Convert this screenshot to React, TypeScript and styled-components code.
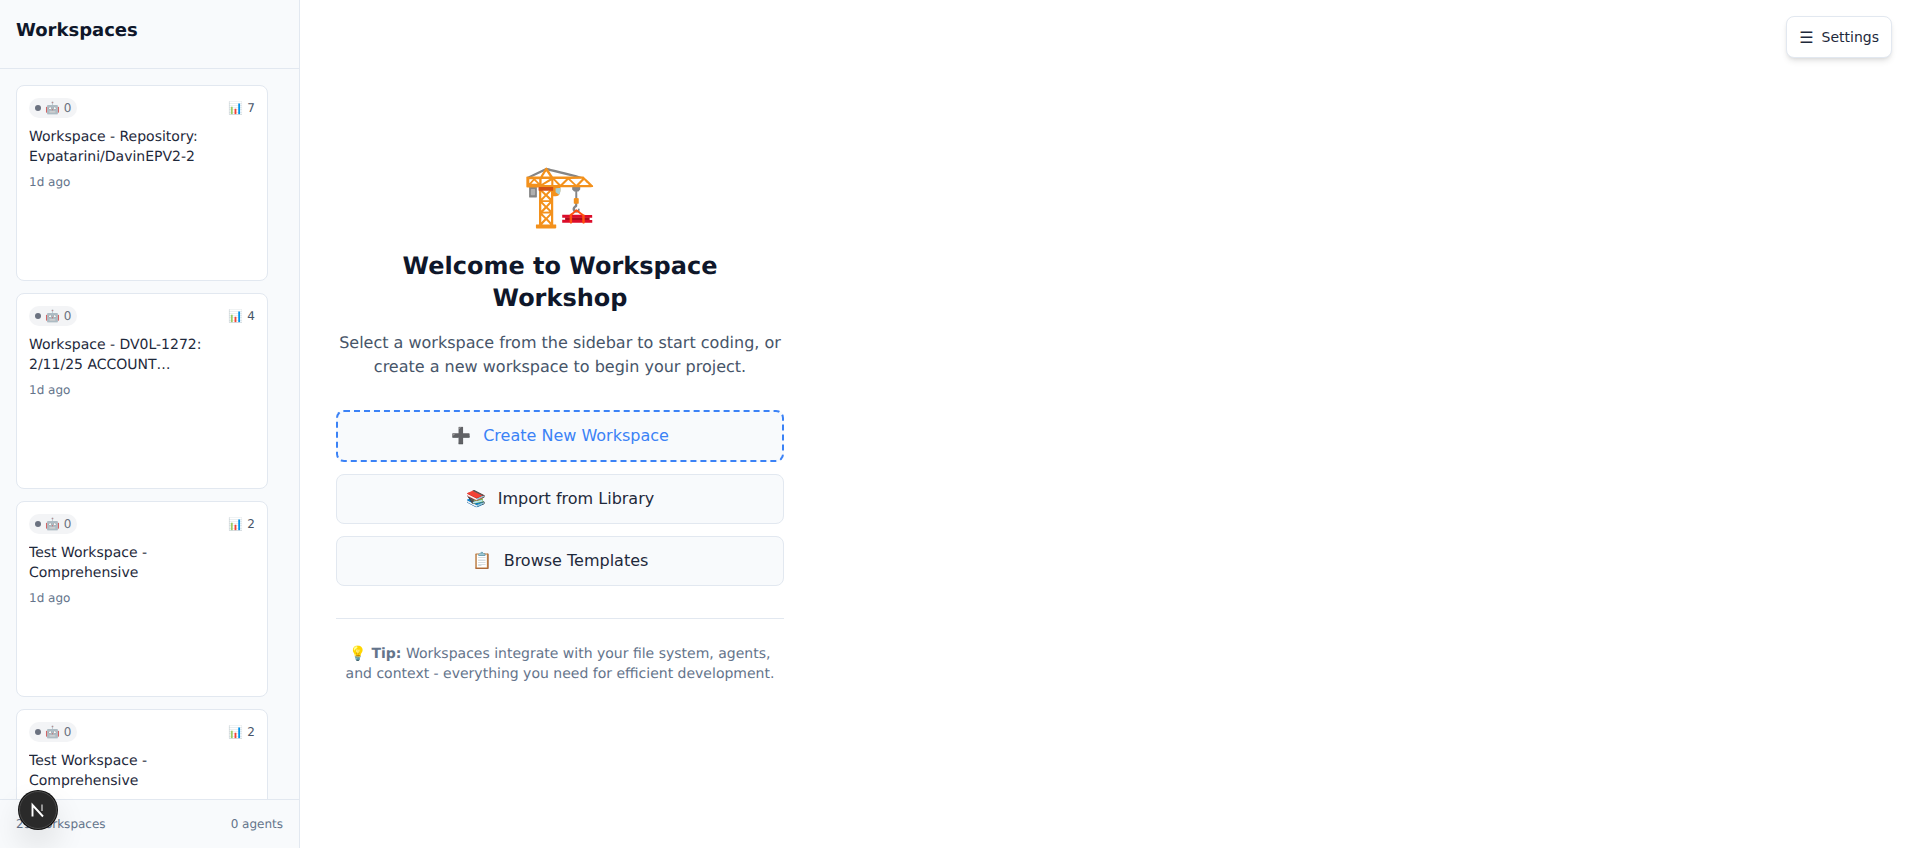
import React from 'react';
import styled, { createGlobalStyle } from 'styled-components';

const GlobalStyle = createGlobalStyle`
  html, body {
    margin: 0;
    padding: 0;
    height: 100%;
    overflow: hidden;
    background: #ffffff;
    font-family: "DejaVu Sans", sans-serif;
    text-rendering: geometricPrecision;
  }
  * {
    box-sizing: border-box;
  }
`;

const Layout = styled.div`
  display: flex;
  width: 100%;
  height: 848px;
  position: relative;
`;

const Sidebar = styled.aside`
  display: flex;
  flex-direction: column;
  width: 300px;
  height: 100%;
  flex-shrink: 0;
  background: #f8fafc;
  border-right: 1px solid #e2e8f0;
`;

const SidebarHeader = styled.div`
  height: 69px;
  padding: 16px;
  border-bottom: 1px solid #e2e8f0;
  flex-shrink: 0;
`;

const SidebarTitle = styled.h2`
  margin: 0;
  font-size: 18px;
  line-height: 30px;
  font-weight: 700;
  color: #0f172a;
`;

const WorkspaceList = styled.div`
  flex: 1;
  min-height: 0;
  overflow: hidden;
  display: flex;
  flex-direction: column;
  gap: 12px;
  padding: 16px 31px 16px 16px;
`;

const Card = styled.div`
  height: 196px;
  flex-shrink: 0;
  padding: 12px;
  background: #ffffff;
  border: 1px solid #e2e8f0;
  border-radius: 8px;
`;

const CardTop = styled.div`
  display: flex;
  align-items: center;
  justify-content: space-between;
  height: 20px;
  margin-bottom: 9px;
`;

const AgentBadge = styled.span`
  display: inline-flex;
  align-items: center;
  gap: 4px;
  height: 20px;
  padding: 0 6px;
  border-radius: 10px;
  background: #f3f4f6;
  font-size: 12px;
  color: #6b7280;
  white-space: pre;
`;

const BadgeEmoji = styled.span`
  opacity: 0.7;
`;

const StatusDot = styled.span`
  width: 6px;
  height: 6px;
  border-radius: 50%;
  background: #6b7280;
`;

const Stat = styled.span`
  font-size: 12px;
  color: #475569;
`;

const CardTitle = styled.div`
  font-size: 14px;
  line-height: 20px;
  color: #1e293b;
  margin-bottom: 7px;
  display: -webkit-box;
  -webkit-line-clamp: 2;
  -webkit-box-orient: vertical;
  overflow: hidden;
`;

const CardTime = styled.div`
  font-size: 12px;
  line-height: 16px;
  color: #64748b;
`;

const SidebarFooter = styled.div`
  display: flex;
  align-items: center;
  justify-content: space-between;
  height: 49px;
  padding: 0 16px;
  flex-shrink: 0;
  background: #f8fafc;
  border-top: 1px solid #e2e8f0;
  font-size: 12px;
  color: #64748b;
`;

const Main = styled.main`
  flex: 1;
  min-width: 0;
  display: flex;
  align-items: center;
  padding-left: 20px;
`;

const Welcome = styled.div`
  width: 480px;
  padding: 32px 16px 37px;
  text-align: center;
`;

const Hero = styled.div`
  font-size: 60px;
  line-height: 75px;
  margin-bottom: 16px;
`;

const Heading = styled.h1`
  margin: 0 0 17px;
  font-size: 24px;
  line-height: 32px;
  font-weight: 700;
  color: #0f172a;
`;

const Lead = styled.p`
  margin: 0 0 31px;
  font-size: 16px;
  line-height: 24px;
  color: #475569;
`;

const Actions = styled.div`
  display: flex;
  flex-direction: column;
  gap: 12px;
`;

const ActionButton = styled.button<{ $primary?: boolean }>`
  display: flex;
  align-items: center;
  justify-content: center;
  gap: 12px;
  width: 100%;
  padding: 12px 24px;
  background: #f8fafc;
  border: ${(p) => (p.$primary ? '2px dashed #3b82f6' : '1px solid #e2e8f0')};
  border-radius: 8px;
  font-family: inherit;
  font-size: 16px;
  line-height: 24px;
  color: ${(p) => (p.$primary ? '#3b82f6' : '#1e293b')};
  cursor: pointer;
`;

const ActionIcon = styled.span`
  font-size: 16px;
  line-height: 24px;
`;

const Tip = styled.div`
  margin-top: 32px;
  padding-top: 25px;
  border-top: 1px solid #e2e8f0;
  font-size: 14px;
  line-height: 20px;
  color: #64748b;

  strong {
    font-weight: 700;
  }
`;

const SettingsButton = styled.button`
  position: absolute;
  top: 16px;
  right: 16px;
  display: flex;
  align-items: center;
  gap: 8px;
  height: 42px;
  padding: 0 12px;
  background: #ffffff;
  border: 1px solid #e2e8f0;
  border-radius: 8px;
  box-shadow: 0 4px 6px -1px rgba(0, 0, 0, 0.1), 0 2px 4px -2px rgba(0, 0, 0, 0.1);
  font-family: inherit;
  font-size: 14px;
  color: #1e293b;
  cursor: pointer;
`;

const MenuGlyph = styled.span`
  font-size: 16px;
`;

const DevIndicator = styled.div`
  position: absolute;
  left: 19px;
  top: 791px;
  width: 38px;
  height: 38px;
  display: flex;
  align-items: center;
  justify-content: center;
  border-radius: 50%;
  background: #2a2a2a;
  border: 1px solid #4a4a4a;
  box-shadow: 0 0 0 1px #111111, 0 16px 32px rgba(0, 0, 0, 0.12);
`;

const workspaces = [
  { title: 'Workspace - Repository: Evpatarini/DavinEPV2-2', stat: 7, time: '1d ago' },
  { title: 'Workspace - DV0L-1272: 2/11/25 ACCOUNT INTEGRATION AND SETUP', stat: 4, time: '1d ago' },
  { title: 'Test Workspace - Comprehensive', stat: 2, time: '1d ago' },
  { title: 'Test Workspace - Comprehensive', stat: 2, time: '1d ago' },
];

const App: React.FC = () => {
  return (
    <Layout>
      <GlobalStyle />
      <Sidebar>
        <SidebarHeader>
          <SidebarTitle>Workspaces</SidebarTitle>
        </SidebarHeader>
        <WorkspaceList>
          {workspaces.map((ws, i) => (
            <Card key={i}>
              <CardTop>
                <AgentBadge>
                  <StatusDot />
                  <span>
                    <BadgeEmoji>🤖</BadgeEmoji> 0
                  </span>
                </AgentBadge>
                <Stat>📊 {ws.stat}</Stat>
              </CardTop>
              <CardTitle>{ws.title}</CardTitle>
              <CardTime>{ws.time}</CardTime>
            </Card>
          ))}
        </WorkspaceList>
        <SidebarFooter>
          <span>29 workspaces</span>
          <span>0 agents</span>
        </SidebarFooter>
      </Sidebar>
      <Main>
        <Welcome>
          <Hero>🏗️</Hero>
          <Heading>Welcome to Workspace Workshop</Heading>
          <Lead>
            Select a workspace from the sidebar to start coding, or create a new
            workspace to begin your project.
          </Lead>
          <Actions>
            <ActionButton $primary>
              <ActionIcon>➕</ActionIcon>
              Create New Workspace
            </ActionButton>
            <ActionButton>
              <ActionIcon>📚</ActionIcon>
              Import from Library
            </ActionButton>
            <ActionButton>
              <ActionIcon>📋</ActionIcon>
              Browse Templates
            </ActionButton>
          </Actions>
          <Tip>
            💡 <strong>Tip:</strong> Workspaces integrate with your file system,
            agents, and context - everything you need for efficient development.
          </Tip>
        </Welcome>
      </Main>
      <SettingsButton>
        <MenuGlyph>☰</MenuGlyph>
        Settings
      </SettingsButton>
      <DevIndicator>
        <svg width="18" height="18" viewBox="0 0 18 18" fill="none">
          <path d="M3.5 15.5V4L14 15.5" stroke="#ffffff" strokeWidth="1.9" />
          <path d="M13 3.5V10" stroke="#b8b8b8" strokeWidth="1.5" />
        </svg>
      </DevIndicator>
    </Layout>
  );
};

export default App;
